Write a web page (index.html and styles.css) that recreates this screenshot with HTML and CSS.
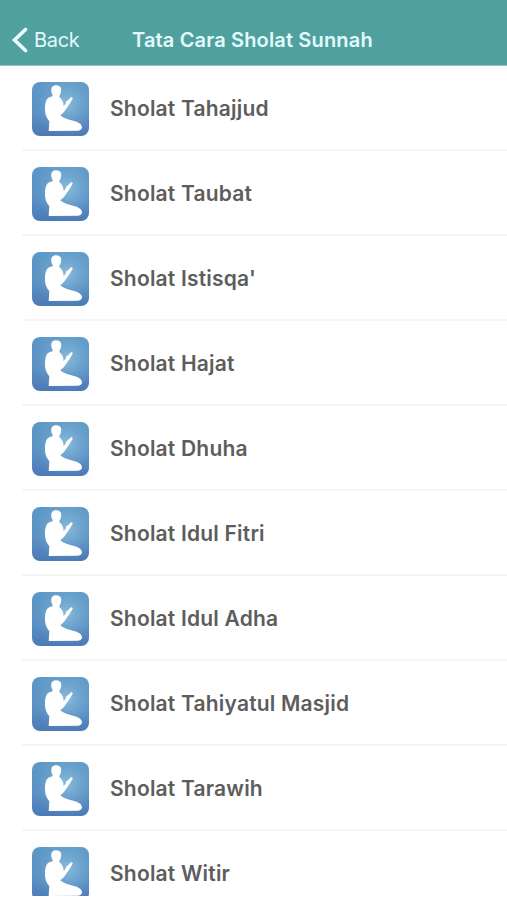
FILE: index.html
```html
<!DOCTYPE html>
<html lang="id">
<head>
<meta charset="utf-8">
<title>Tata Cara Sholat Sunnah</title>
<link rel="stylesheet" href="styles.css">
</head>
<body>
<svg class="defs" width="0" height="0" aria-hidden="true">
  <defs>
    <linearGradient id="shade" x1="0" y1="0" x2="0" y2="1">
      <stop offset="0" stop-color="#5d98c6"/><stop offset=".6" stop-color="#5a8fc3"/><stop offset="1" stop-color="#4c7ab6"/>
    </linearGradient>
    <radialGradient id="glow" cx=".6" cy=".4" r=".6">
      <stop offset="0" stop-color="#8fc1de" stop-opacity=".9"/><stop offset="1" stop-color="#6ca6d2" stop-opacity="0"/>
    </radialGradient>
    <symbol id="prayer" viewBox="24 19 171 162">
      <rect x="24" y="19" width="171" height="162" rx="24" fill="url(#shade)"/>
      <rect x="24" y="19" width="171" height="162" rx="24" fill="url(#glow)"/>
      <path fill="#fff" d="M86 58C81 51 80 40 84 34C89 27 105 27 110 35C113 40 112 52 108 57Q105 60 106 64Q114 70 117 79L119 91L125 84Q125 77 132 74L141 65Q146 63 146 69L142 76L137 84L120 109L109 119Q115 126 129 130L158 138Q174 144 174 156Q172 164 161 165L74 166L76 137Q63 121 63 103Q62 82 69 70Q74 64 86 62Z"/>
    </symbol>
  </defs>
</svg>
<div class="screen">
  <header class="bar">
    <a class="back"><svg class="chevron" viewBox="0 0 17 26"><path d="M14.5 2.5L3.5 13L14.5 23.5"/></svg><span>Back</span></a>
    <h1 class="title">Tata Cara Sholat Sunnah</h1>
  </header>
  <ul class="list">
    <li class="row"><svg class="icon"><use href="#prayer"/></svg><span>Sholat Tahajjud</span></li>
    <li class="row"><svg class="icon"><use href="#prayer"/></svg><span>Sholat Taubat</span></li>
    <li class="row"><svg class="icon"><use href="#prayer"/></svg><span>Sholat Istisqa'</span></li>
    <li class="row"><svg class="icon"><use href="#prayer"/></svg><span>Sholat Hajat</span></li>
    <li class="row"><svg class="icon"><use href="#prayer"/></svg><span>Sholat Dhuha</span></li>
    <li class="row"><svg class="icon"><use href="#prayer"/></svg><span>Sholat Idul Fitri</span></li>
    <li class="row"><svg class="icon"><use href="#prayer"/></svg><span>Sholat Idul Adha</span></li>
    <li class="row"><svg class="icon"><use href="#prayer"/></svg><span>Sholat Tahiyatul Masjid</span></li>
    <li class="row"><svg class="icon"><use href="#prayer"/></svg><span>Sholat Tarawih</span></li>
    <li class="row"><svg class="icon"><use href="#prayer"/></svg><span>Sholat Witir</span></li>
  </ul>
</div>
</body>
</html>
```
FILE: styles.css
```css
* { box-sizing: border-box; }
body {
  margin: 0;
  background: #fff;
  font-family: Inter, "Liberation Sans", sans-serif;
  overflow: hidden;
}
.defs { display: block; }
.screen { height: 896px; overflow: hidden; }
.bar {
  display: grid;
  grid-template-columns: 121px 1fr 124px;
  height: 66px;
  padding: 26px 0 11px 11px;
  background: #50a09f;
  border-bottom: 1px solid #8fc4c3;
  color: #e2fafa;
}
.back { display: flex; align-items: center; font-size: 20px; letter-spacing: -.3px; }
.chevron {
  width: 17px;
  height: 26px;
  margin-right: 6px;
  fill: none;
  stroke: #effeff;
  stroke-width: 3.6;
  stroke-linecap: round;
}
.title {
  margin: 0;
  align-self: center;
  font-size: 20px;
  font-weight: 600;
  letter-spacing: .16px;
  white-space: nowrap;
}
.list { margin: 0; padding: 0 0 0 22px; list-style: none; }
.row {
  display: flex;
  align-items: center;
  gap: 21px;
  height: 85px;
  padding: 2px 0 0 10px;
  border-bottom: 2px solid #f5f5f5;
  color: #5d5d5d;
  font-size: 21px;
  font-weight: 600;
  letter-spacing: .2px;
  white-space: nowrap;
}
.icon { width: 57px; height: 54px; }
```
